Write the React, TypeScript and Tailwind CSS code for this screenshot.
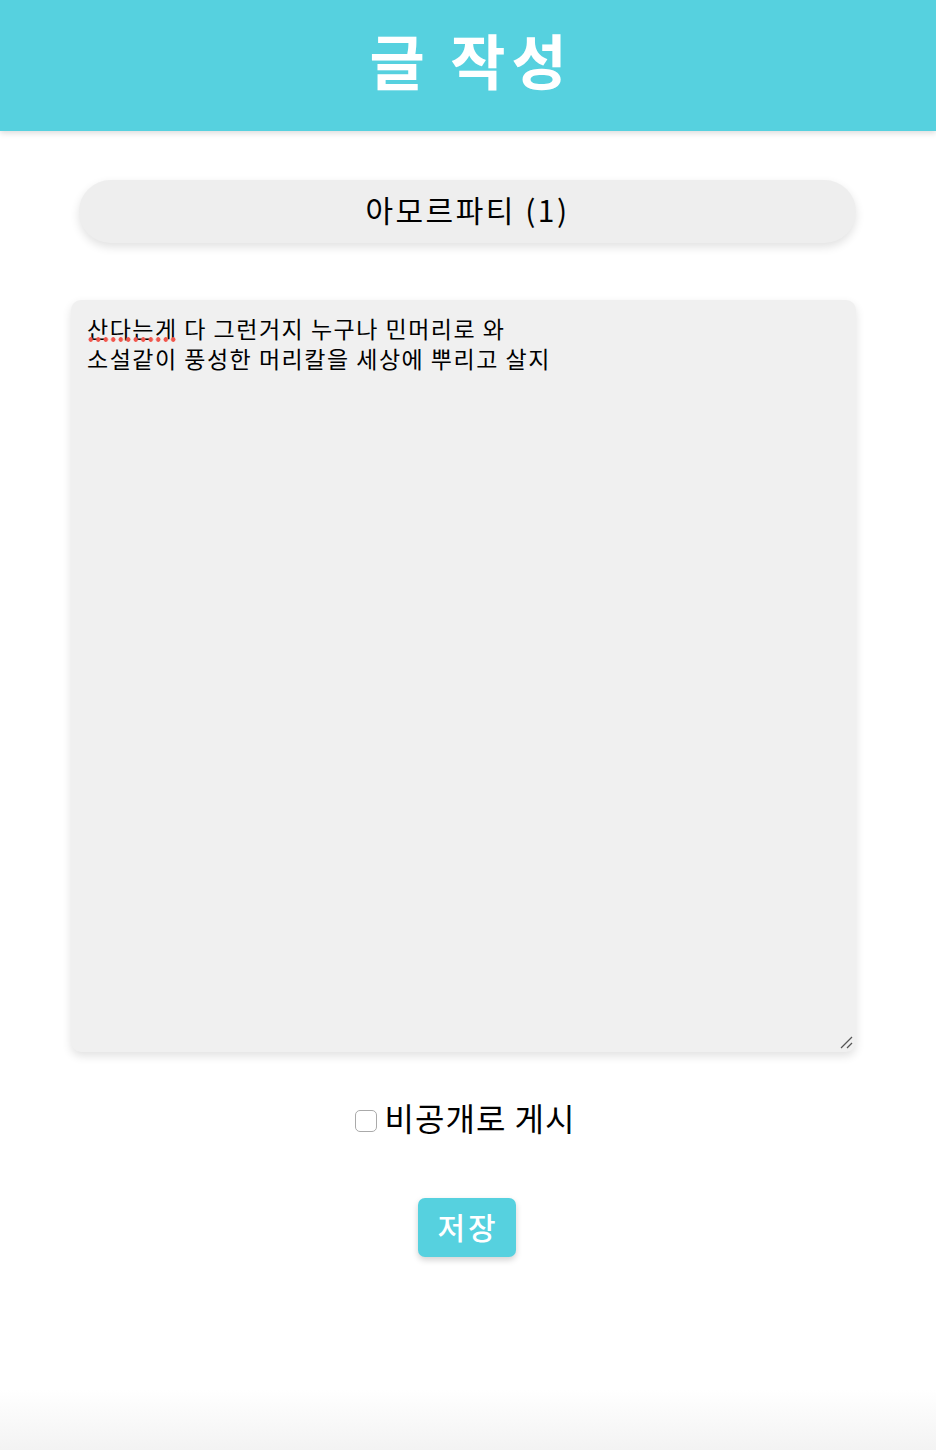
import React from "react";

export default function App() {
  const font = { fontFamily: '"Noto Sans CJK KR", "Noto Sans", sans-serif' };
  return (
    <div className="w-[936px] h-[1450px] bg-white flex flex-col" style={font}>
      <header className="h-[131px] bg-[#56d1df] flex items-center justify-center shadow-[0_2px_6px_rgba(0,0,0,0.15)]">
        <h1 className="text-[60px] font-bold text-white leading-none tracking-[6px] -mt-[14px] ml-[6px]">글 작성</h1>
      </header>
      <div className="flex-1 flex flex-col">
        <div className="mt-[49px] ml-[79px] w-[777px] h-[63px] rounded-full bg-[#eeeeee] shadow-[0_4px_10px_rgba(0,0,0,0.12)] flex items-center justify-center">
          <span className="text-[30px] text-black leading-none tracking-[2.5px] -mt-[6px]">아모르파티 (1)</span>
        </div>
        <div className="relative mt-[57px] ml-[71px] w-[785px] h-[752px] rounded-[10px] bg-[#f0f0f0] shadow-[0_4px_10px_rgba(0,0,0,0.12)] px-[16px] pt-[13px]">
          <div className="text-[23px] leading-[30px] text-black tracking-[1.5px]">
            <span className="relative inline-block">
              산다는게
              <span className="absolute left-0 right-[2px] bottom-[1px] h-[5px] bg-[radial-gradient(circle,#f0564c_2px,transparent_2.6px)] bg-[length:7.5px_5px]" />
            </span>{" "}
            다 그런거지 누구나 민머리로 와
            <br />
            소설같이 풍성한 머리칼을 세상에 뿌리고 살지
          </div>
          <svg className="absolute right-[3px] bottom-[3px]" width="14" height="14" viewBox="0 0 14 14">
            <line x1="2" y1="13" x2="13" y2="2" stroke="#555" strokeWidth="1.2" />
            <line x1="8" y1="13" x2="13" y2="8" stroke="#555" strokeWidth="1.2" />
          </svg>
        </div>
        <label className="mt-[57px] self-center flex items-center gap-[8px] -ml-[6px]">
          <span className="w-[22px] h-[22px] rounded-[5px] border border-[#aaa] bg-white inline-block" />
          <span className="text-[32px] leading-none text-black tracking-[1px] -mt-[8px]">비공개로 게시</span>
        </label>
        <button className="mt-[65px] self-center -ml-[3px] w-[98px] h-[59px] rounded-[7px] bg-[#56d1df] text-white text-[30px] font-medium leading-none tracking-[3px] shadow-[0_3px_6px_rgba(0,0,0,0.18)] flex items-center justify-center">
          <span className="-mt-[4px] ml-[3px]">저장</span>
        </button>
      </div>
      <div className="h-[60px] bg-gradient-to-b from-white to-[#f3f3f3]" />
    </div>
  );
}
